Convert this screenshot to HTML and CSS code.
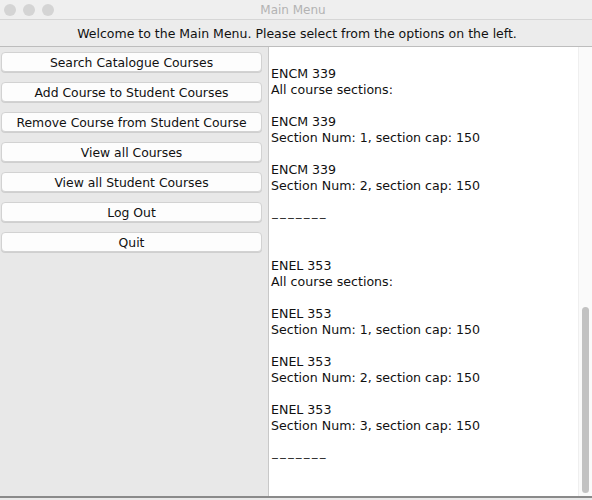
FILE: index.html
```html
<!DOCTYPE html>
<html>
<head>
<meta charset="utf-8">
<link rel="stylesheet" href="styles.css">
</head>
<body>
<div class="window">
  <div class="titlebar">
    <div class="lights"><span class="light"></span><span class="light"></span><span class="light"></span></div>
    <div class="title">Main Menu</div>
  </div>
  <div class="header">Welcome to the Main Menu. Please select from the options on the left.</div>
  <div class="main">
    <div class="menu">
      <button class="btn">Search Catalogue Courses</button>
      <button class="btn">Add Course to Student Courses</button>
      <button class="btn">Remove Course from Student Course</button>
      <button class="btn">View all Courses</button>
      <button class="btn">View all Student Courses</button>
      <button class="btn">Log Out</button>
      <button class="btn">Quit</button>
    </div>
    <div class="output">
      <div class="text">
<div class="line">&nbsp;</div>
<div class="line">ENCM 339</div>
<div class="line">All course sections:</div>
<div class="line">&nbsp;</div>
<div class="line">ENCM 339</div>
<div class="line">Section Num: 1, section cap: 150</div>
<div class="line">&nbsp;</div>
<div class="line">ENCM 339</div>
<div class="line">Section Num: 2, section cap: 150</div>
<div class="line">&nbsp;</div>
<div class="line"><span class="dashes">-------</span></div>
<div class="line">&nbsp;</div>
<div class="line">&nbsp;</div>
<div class="line">ENEL 353</div>
<div class="line">All course sections:</div>
<div class="line">&nbsp;</div>
<div class="line">ENEL 353</div>
<div class="line">Section Num: 1, section cap: 150</div>
<div class="line">&nbsp;</div>
<div class="line">ENEL 353</div>
<div class="line">Section Num: 2, section cap: 150</div>
<div class="line">&nbsp;</div>
<div class="line">ENEL 353</div>
<div class="line">Section Num: 3, section cap: 150</div>
<div class="line">&nbsp;</div>
<div class="line"><span class="dashes">-------</span></div>
      </div>
      <div class="scrollbar"><div class="thumb"></div></div>
    </div>
  </div>
</div>
</body>
</html>
```
FILE: styles.css
```css
html, body {
  margin: 0;
  padding: 0;
  background: #ffffff;
}
.window {
  width: 592px;
  height: 500px;
  display: flex;
  flex-direction: column;
  background: #e9e9e9;
  font-family: "DejaVu Sans", "Liberation Sans", sans-serif;
  color: #222;
  overflow: hidden;
}
.titlebar {
  height: 20px;
  flex: none;
  display: flex;
  align-items: center;
  background: #efefef;
  border-bottom: 1px solid #d6d6d6;
  box-sizing: border-box;
}
.lights {
  display: flex;
  gap: 7px;
  padding-left: 4px;
}
.light {
  width: 12px;
  height: 12px;
  border-radius: 50%;
  background: #d4d4d4;
}
.title {
  flex: 1;
  text-align: center;
  font-size: 12px;
  color: #b3b3b3;
  margin-left: -60px;
}
.header {
  height: 27px;
  flex: none;
  box-sizing: border-box;
  display: flex;
  align-items: center;
  justify-content: center;
  font-size: 12.5px;
  color: #111;
  background: #ececec;
  border-bottom: 1px solid #bdbdbd;
  padding-left: 2px;
}
.main {
  flex: 1;
  display: flex;
  min-height: 0;
  border-bottom: 2px solid #8a8a8a;
  margin-bottom: 2px;
}
.menu {
  width: 269px;
  flex: none;
  box-sizing: border-box;
  display: flex;
  flex-direction: column;
  gap: 10px;
  padding: 5px 6px 0 1px;
  background: #e8e8e8;
  border-right: 1px solid #c8c8c8;
}
.btn {
  height: 20px;
  margin: 0;
  padding: 0;
  background: #fdfdfd;
  border: 1px solid #d2d2d2;
  border-radius: 4px;
  box-shadow: 0 1px 0 #cfcfcf;
  font-family: "DejaVu Sans", "Liberation Sans", sans-serif;
  font-size: 12.4px;
  color: #111;
  text-align: center;
}
.output {
  flex: 1;
  display: flex;
  background: #ffffff;
}
.text {
  flex: 1;
  padding: 3px 0 0 2px;
  font-size: 12.6px;
  line-height: 16px;
  color: #111;
}
.line {
  white-space: pre;
}
.dashes {
  display: inline-block;
  transform: scaleX(1.75);
  transform-origin: left center;
  color: #333;
}
.scrollbar {
  width: 14px;
  flex: none;
  background: #fafafa;
  border-left: 1px solid #efefef;
  display: flex;
  flex-direction: column;
  justify-content: flex-end;
  padding-bottom: 3px;
  box-sizing: border-box;
}
.thumb {
  width: 7px;
  height: 186px;
  margin-left: 3px;
  border-radius: 4px;
  background: #c2c2c2;
}
```
